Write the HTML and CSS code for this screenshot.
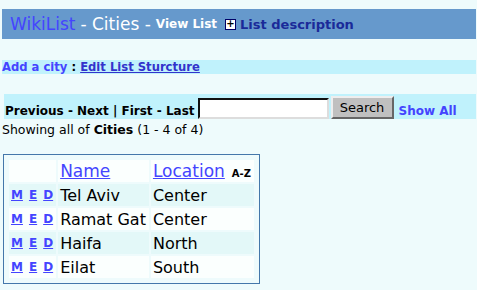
FILE: index.html
```html
<!DOCTYPE html>
<html lang="en">
<head>
  <meta charset="UTF-8">
  <title>WikiList - Cities</title>
  <link rel="stylesheet" href="styles.css">
</head>
<body>

  <div class="title-bar">
    <span class="brand">WikiList</span>
    <span class="list-name">- Cities -</span>
    <span class="view-list">View List</span>
    <span class="expand-box">+</span>
    <a class="desc-link" href="#">List description</a>
  </div>

  <div class="action-bar">
    <a class="add-link" href="#">Add a city</a> : <a class="edit-link" href="#">Edit List Sturcture</a>
  </div>

  <div class="nav-bar">
    <span class="pager">Previous - Next | First - Last</span>
    <input type="text" class="search-input">
    <button class="search-btn">Search</button>
    <a class="show-all" href="#">Show All</a>
  </div>
  <div class="showing">Showing all of <b>Cities</b> (1 - 4 of 4)</div>

  <table class="city-table">
    <tr class="head-row">
      <td></td>
      <td><a href="#">Name</a></td>
      <td><a href="#">Location</a><span class="sort">A-Z</span></td>
    </tr>
    <tr class="odd">
      <td class="ops"><a href="#">M</a><a href="#">E</a><a href="#">D</a></td>
      <td>Tel Aviv</td>
      <td>Center</td>
    </tr>
    <tr>
      <td class="ops"><a href="#">M</a><a href="#">E</a><a href="#">D</a></td>
      <td>Ramat Gat</td>
      <td>Center</td>
    </tr>
    <tr class="odd">
      <td class="ops"><a href="#">M</a><a href="#">E</a><a href="#">D</a></td>
      <td>Haifa</td>
      <td>North</td>
    </tr>
    <tr>
      <td class="ops"><a href="#">M</a><a href="#">E</a><a href="#">D</a></td>
      <td>Eilat</td>
      <td>South</td>
    </tr>
  </table>

</body>
</html>
```

FILE: styles.css
```css
body {
  font-family: 'DejaVu Sans', Verdana, sans-serif;
  background-color: #eefbfc;
  margin: 0;
  padding: 9px 1px 0 2px;
  font-size: 13px;
  color: #000;
}

a {
  color: #4444ff;
}

.title-bar {
  background-color: #6699cc;
  height: 30px;
  display: flex;
  align-items: center;
  padding-left: 8px;
  white-space: nowrap;
}

.brand {
  color: #4444ff;
  font-size: 17px;
  margin-right: 5px;
}

.list-name {
  color: #fff;
  font-size: 17px;
  margin-right: 5px;
}

.view-list {
  color: #fff;
  font-weight: bold;
  font-size: 12px;
  margin-right: 8px;
}

.expand-box {
  display: inline-flex;
  align-items: center;
  justify-content: center;
  width: 9px;
  height: 9px;
  border: 1px solid #000066;
  background: #fff;
  color: #000;
  font-size: 10px;
  font-weight: bold;
  line-height: 1;
  margin-right: 4px;
}

.desc-link {
  color: #1a2a99;
  font-weight: bold;
  font-size: 13px;
  text-decoration: none;
}

.action-bar {
  background-color: #c0f2fc;
  margin-top: 21px;
  height: 14px;
  line-height: 14px;
  font-size: 11.6px;
  font-weight: bold;
}

.add-link {
  color: #4444ff;
  text-decoration: none;
}

.edit-link {
  color: #3333cc;
}

.nav-bar {
  background-color: #c0f2fc;
  margin: 20px 0 0 2px;
  height: 25px;
  display: flex;
  align-items: flex-end;
  padding-left: 1px;
  white-space: nowrap;
}

.pager {
  font-weight: bold;
  font-size: 12px;
  margin-bottom: 1px;
  margin-right: 3px;
}

.search-input {
  width: 127px;
  height: 17px;
  border: 2px inset #888;
  border-top-color: #666;
  border-left-color: #666;
  border-right-color: #ddd;
  border-bottom-color: #ddd;
  background: #fff;
  padding: 0;
  margin: 0 2px 0 0;
  box-sizing: content-box;
}

.search-btn {
  width: 63px;
  height: 23px;
  font-family: 'DejaVu Sans', Verdana, sans-serif;
  font-size: 13px;
  background: #c0c0c0;
  border: 2px solid;
  border-color: #eee #666 #666 #eee;
  padding: 0;
  margin: 0 5px 0 0;
  position: relative;
  top: 2px;
  align-self: flex-start;
}

.show-all {
  color: #4444ff;
  font-weight: bold;
  font-size: 12px;
  text-decoration: none;
  margin-bottom: 1px;
}

.showing {
  font-size: 12.5px;
  margin-top: 3px;
}

.city-table {
  margin: 17px 0 0 1px;
  border: 1px solid #4477aa;
  border-spacing: 2px;
  padding: 3px;
  font-size: 16px;
}

.city-table td {
  background: #fbfffe;
  height: 22px;
  padding: 0 3px 0 2px;
  white-space: nowrap;
}

.city-table tr.odd td {
  background: #e3f8f8;
}

.head-row a {
  font-size: 17px;
}

.sort {
  font-size: 10px;
  font-weight: bold;
  margin-left: 7px;
}

.ops {
  font-size: 12px;
  font-weight: bold;
}

.ops a {
  margin-right: 6px;
}

.ops a:last-child {
  margin-right: 0;
}
```
